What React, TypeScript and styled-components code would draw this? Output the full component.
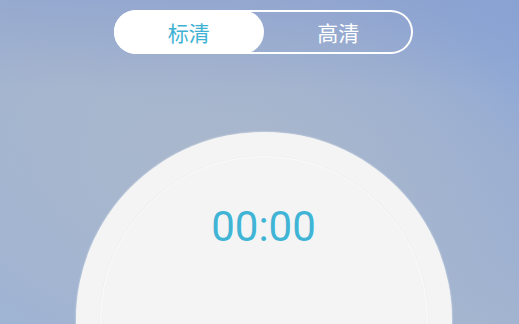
import React, { useState } from "react";
import styled, { createGlobalStyle } from "styled-components";

const GlobalStyle = createGlobalStyle`
  html, body {
    margin: 0;
    padding: 0;
    width: 519px;
    height: 324px;
    overflow: hidden;
  }
  body {
    font-family: Roboto, "Noto Sans CJK SC", "Noto Sans", sans-serif;
  }
`;

const Page = styled.div`
  width: 519px;
  height: 324px;
  box-sizing: border-box;
  padding-left: 8px;
  overflow: hidden;
  display: flex;
  flex-direction: column;
  align-items: center;
  background:
    linear-gradient(to bottom, rgba(140, 160, 206, 0.55) 0%, rgba(140, 160, 206, 0) 28%),
    radial-gradient(ellipse 60% 60% at 45% 50%, rgba(170, 184, 204, 0.9) 0%, rgba(170, 184, 204, 0) 100%),
    linear-gradient(to top right, #a0b4d3 0%, #a4b5cf 45%, #9aaed2 75%, #86a4d7 100%);
`;

const Toggle = styled.div`
  margin-top: 10px;
  width: 299px;
  height: 44px;
  flex-shrink: 0;
  display: flex;
  border-radius: 22px;
  box-shadow: inset 0 0 0 2px #ffffff;
`;

const Segment = styled.button<{ $active: boolean }>`
  flex: 1;
  height: 100%;
  border: none;
  margin: 0;
  padding: 0;
  border-radius: 22px;
  background: ${(p) => (p.$active ? "#ffffff" : "transparent")};
  color: ${(p) => (p.$active ? "#3fb2d3" : "#ffffff")};
  font-family: "Noto Sans CJK SC", sans-serif;
  font-size: 21px;
  line-height: 44px;
  cursor: pointer;
`;

const Dial = styled.div`
  margin-top: 78px;
  width: 376px;
  height: 376px;
  flex-shrink: 0;
  border-radius: 50%;
  background: #f4f4f5;
  box-shadow: 0 0 2px rgba(255, 255, 255, 0.8);
  display: flex;
  justify-content: center;
  align-items: flex-start;
  padding-top: 24px;
  box-sizing: border-box;
`;

const InnerRing = styled.div`
  width: 328px;
  height: 328px;
  box-sizing: border-box;
  border-radius: 50%;
  border: 1.5px solid #fbfbfc;
  box-shadow: 0 0 1.5px rgba(0, 0, 0, 0.08);
  display: flex;
  flex-direction: column;
  align-items: center;
  padding-top: 49px;
`;

const Time = styled.div`
  font-family: Roboto, sans-serif;
  font-size: 42px;
  line-height: 1;
  color: #40b4d5;
`;

export default function App() {
  const [hd, setHd] = useState(false);
  return (
    <>
      <GlobalStyle />
      <Page>
        <Toggle>
          <Segment $active={!hd} onClick={() => setHd(false)}>标清</Segment>
          <Segment $active={hd} onClick={() => setHd(true)}>高清</Segment>
        </Toggle>
        <Dial>
          <InnerRing>
            <Time>00:00</Time>
          </InnerRing>
        </Dial>
      </Page>
    </>
  );
}
